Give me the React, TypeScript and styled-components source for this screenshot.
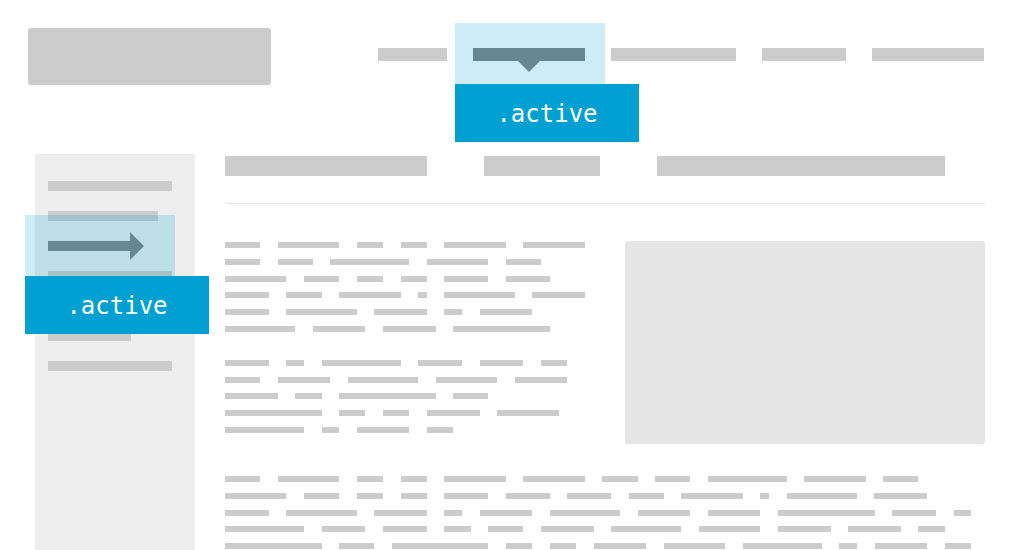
import React from 'react';
import styled, { createGlobalStyle } from 'styled-components';

const GlobalStyle = createGlobalStyle`
  html, body {
    margin: 0;
    padding: 0;
    background: #ffffff;
  }
  body {
    font-family: "DejaVu Sans", sans-serif;
    overflow: hidden;
  }
`;

const UNIT = 8.78;

const Page = styled.div`
  width: 1020px;
  height: 550px;
  overflow: hidden;
`;

const Header = styled.header`
  display: flex;
  align-items: flex-start;
  height: 154px;
  padding: 28px 36px 0 28px;
  box-sizing: border-box;
`;

const Logo = styled.div`
  width: 243px;
  height: 57px;
  background: #cccccc;
  border-radius: 3px;
`;

const Nav = styled.nav`
  display: flex;
  gap: 26px;
  margin-left: auto;
  margin-top: 20px;
`;

const NavItem = styled.div<{ $w: number }>`
  width: ${(p) => p.$w}px;
  height: 13px;
  background: #cccccc;
`;

const ActiveSpot = styled.div`
  position: relative;
`;

const Highlight = styled.div<{ $left: number; $top: number }>`
  position: absolute;
  left: ${(p) => p.$left}px;
  top: ${(p) => p.$top}px;
  width: 150px;
  height: 61px;
  background: rgba(0, 160, 210, 0.2);
`;

const ActiveBar = styled.div<{ $w: number }>`
  position: relative;
  width: ${(p) => p.$w}px;
  height: 13px;
  background: #668891;

  &::after {
    content: '';
    position: absolute;
    left: 50%;
    top: 13px;
    margin-left: -11px;
    border-left: 11px solid transparent;
    border-right: 11px solid transparent;
    border-top: 11px solid #668891;
  }
`;

const Label = styled.div<{ $left: number; $top: number }>`
  position: absolute;
  left: ${(p) => p.$left}px;
  top: ${(p) => p.$top}px;
  width: 184px;
  height: 58px;
  padding-top: 2px;
  box-sizing: border-box;
  background: #00a0d2;
  color: #ffffff;
  font-family: "DejaVu Sans Mono", "Liberation Mono", monospace;
  font-size: 24px;
  line-height: 56px;
  text-align: center;
  z-index: 2;
`;

const Body = styled.div`
  display: flex;
  gap: 30px;
  padding-left: 35px;
  height: 396px;
`;

const Sidebar = styled.aside`
  width: 160px;
  flex-shrink: 0;
  background: #eeeeee;
  padding: 27px 0 0 13px;
  box-sizing: border-box;
  display: flex;
  flex-direction: column;
  gap: 20px;
`;

const SideItem = styled.div<{ $w: number }>`
  width: ${(p) => p.$w}px;
  height: 10px;
  background: #cccccc;
`;

const ArrowRow = styled(ActiveSpot)`
  height: 10px;
`;

const ArrowIcon = styled.svg`
  position: relative;
  display: block;
  margin-top: -9px;
`;

const Main = styled.main`
  width: 760px;
  padding-top: 2px;
`;

const Tabs = styled.div`
  display: flex;
  gap: 57px;
`;

const Tab = styled.div<{ $w: number }>`
  width: ${(p) => p.$w}px;
  height: 20px;
  background: #cccccc;
`;

const Divider = styled.hr`
  border: 0;
  margin: 27px 0 0 1px;
  height: 1px;
  background: #e6e6e6;
`;

const Content = styled.div`
  display: grid;
  grid-template-columns: 360px 360px;
  gap: 40px;
  margin-top: 37px;
`;

const TextColumn = styled.div`
  padding-top: 1px;
  display: flex;
  flex-direction: column;
  gap: 28px;
`;

const Paragraph = styled.div<{ $top?: number }>`
  display: flex;
  flex-direction: column;
  gap: 10.75px;
  margin-top: ${(p) => p.$top ?? 0}px;
`;

const Line = styled.div`
  display: flex;
  gap: ${UNIT * 2}px;
`;

const Word = styled.div<{ $n: number }>`
  width: ${(p) => p.$n * UNIT}px;
  height: 6px;
  background: #cccccc;
`;

const Picture = styled.div`
  height: 203px;
  background: #e5e5e5;
  border-radius: 3px;
`;

const para1 = [
  [4, 7, 3, 3, 7, 7],
  [4, 4, 9, 7, 4],
  [7, 4, 3, 3, 5, 5],
  [5, 4, 7, 1, 8, 6],
  [5, 8, 6, 2, 6],
  [8, 6, 6, 11],
];

const para2 = [
  [5, 2, 9, 5, 5, 3],
  [4, 6, 8, 7, 6],
  [6, 3, 11, 4],
  [11, 3, 3, 6, 7],
  [9, 2, 6, 3],
];

const para3 = [
  [4, 7, 3, 3, 7, 7, 4, 4, 9, 7, 4],
  [7, 4, 3, 3, 5, 5, 5, 4, 7, 1, 8, 6],
  [5, 8, 6, 2, 6, 8, 6, 6, 11, 5, 2],
  [9, 5, 5, 3, 4, 6, 8, 7, 6, 6, 3],
  [11, 4, 11, 3, 3, 6, 7, 9, 2, 6, 3],
];

const Text: React.FC<{ lines: number[][]; top?: number }> = ({ lines, top }) => (
  <Paragraph $top={top}>
    {lines.map((words, i) => (
      <Line key={i}>
        {words.map((n, j) => (
          <Word key={j} $n={n} />
        ))}
      </Line>
    ))}
  </Paragraph>
);

const App: React.FC = () => {
  return (
    <Page>
      <GlobalStyle />
      <Header>
        <Logo />
        <Nav>
          <NavItem $w={69} />
          <ActiveSpot>
            <Highlight $left={-18} $top={-25} />
            <ActiveBar $w={112} />
            <Label $left={-18} $top={36}>.active</Label>
          </ActiveSpot>
          <NavItem $w={125} />
          <NavItem $w={84} />
          <NavItem $w={112} />
        </Nav>
      </Header>

      <Body>
        <Sidebar>
          <SideItem $w={124} />
          <SideItem $w={110} />
          <ArrowRow>
            <Highlight $left={-23} $top={-26} />
            <ArrowIcon width="96" height="28" viewBox="0 0 96 28">
              <path d="M0 9H82V0L96 14L82 28V19H0Z" fill="#668891" />
            </ArrowIcon>
            <Label $left={-23} $top={35}>.active</Label>
          </ArrowRow>
          <SideItem $w={124} />
          <SideItem $w={124} />
          <SideItem $w={83} />
          <SideItem $w={124} />
        </Sidebar>

        <Main>
          <Tabs>
            <Tab $w={202} />
            <Tab $w={116} />
            <Tab $w={288} />
          </Tabs>
          <Divider />
          <Content>
            <TextColumn>
              <Text lines={para1} />
              <Text lines={para2} />
            </TextColumn>
            <Picture />
          </Content>
          <Text lines={para3} top={32} />
        </Main>
      </Body>
    </Page>
  );
};

export default App;
